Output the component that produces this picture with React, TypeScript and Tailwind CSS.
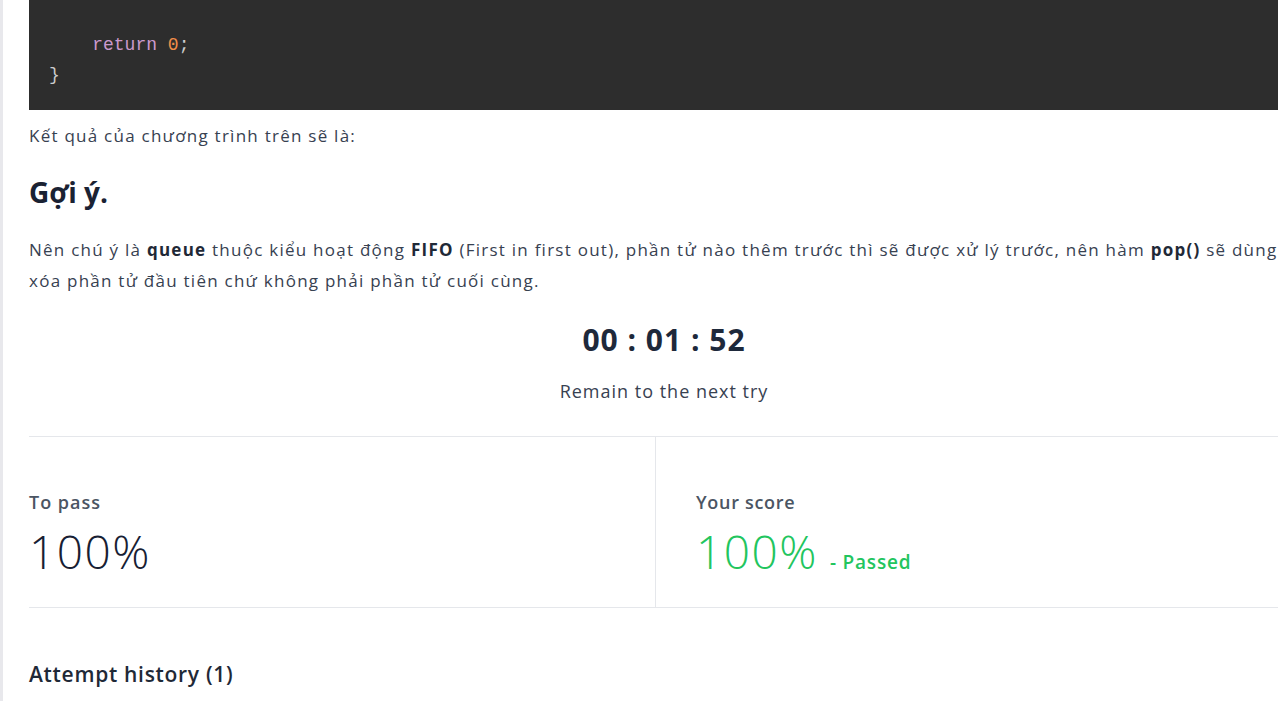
import React from 'react';

const sans = { fontFamily: '"Open Sans", "Noto Sans", sans-serif' };

export default function App() {
  return (
    <div className="flex h-[701px] w-[1278px] overflow-hidden bg-white" style={sans}>
      {/* left rail */}
      <div className="w-[3px] shrink-0 bg-[#e8e8ec]" />

      <div className="ml-[26px] w-[1270px] shrink-0">
        {/* code block */}
        <pre className="bg-[#2d2d2d] pl-[20px] pt-[30px] pb-[20px] font-['Liberation_Mono',monospace] text-[18px] leading-[30px] text-[#cccccc]">
          <div>
            {'    '}
            <span className="text-[#cc99cd]">return</span> <span className="text-[#f08d49]">0</span>;
          </div>
          <div>{'}'}</div>
        </pre>

        <p className="mt-[13px] text-[17px] leading-[26px] tracking-[1.25px] text-[#374151]">Kết quả của chương trình trên sẽ là:</p>

        <h2 className="mt-[25px] text-[28px] font-bold leading-[36px] text-[#1a2233]">Gợi ý.</h2>

        <p className="mt-[24px] whitespace-nowrap text-[17px] leading-[31px] tracking-[1.25px] text-[#374151]">
          Nên chú ý là <b className="text-[#1f2937]">queue</b> thuộc kiểu hoạt động <b className="text-[#1f2937]">FIFO</b> (First in first
          out), phần tử nào thêm trước thì sẽ được xử lý trước, nên hàm <b className="text-[#1f2937]">pop()</b> sẽ dùng để
          <br />
          xóa phần tử đầu tiên chứ không phải phần tử cuối cùng.
        </p>

        {/* countdown */}
        <div className="mt-[26px] flex flex-col items-center">
          <div className="text-[30px] font-bold leading-[36px] tracking-[1px] text-[#1e293b]">00 : 01 : 52</div>
          <div className="mt-[20px] text-[18px] leading-[26px] tracking-[1px] text-[#374151]">Remain to the next try</div>
        </div>

        {/* score */}
        <div className="mt-[32px] flex border-y border-[#e5e7eb]">
          <div className="w-[627px] border-r border-[#e5e7eb] pt-[52px] pb-[30px]">
            <div className="text-[18px] font-semibold leading-[26px] tracking-[1px] text-[#4b5563]">To pass</div>
            <div className="mt-[10px] text-[46px] font-light leading-[52px] tracking-[1.5px] text-[#172033]">100%</div>
          </div>
          <div className="flex-1 pl-[40px] pt-[52px] pb-[30px]">
            <div className="text-[18px] font-semibold leading-[26px] tracking-[0.7px] text-[#4b5563]">Your score</div>
            <div className="mt-[10px] flex items-baseline gap-[12px]">
              <span className="text-[46px] font-light leading-[52px] tracking-[1.5px] text-[#22c55e]">100%</span>
              <span className="text-[19px] font-semibold tracking-[0.8px] text-[#22c55e]">- Passed</span>
            </div>
          </div>
        </div>

        <h3 className="mt-[52px] text-[21px] font-semibold leading-[28px] tracking-[0.7px] text-[#1f2937]">Attempt history (1)</h3>
      </div>
    </div>
  );
}
